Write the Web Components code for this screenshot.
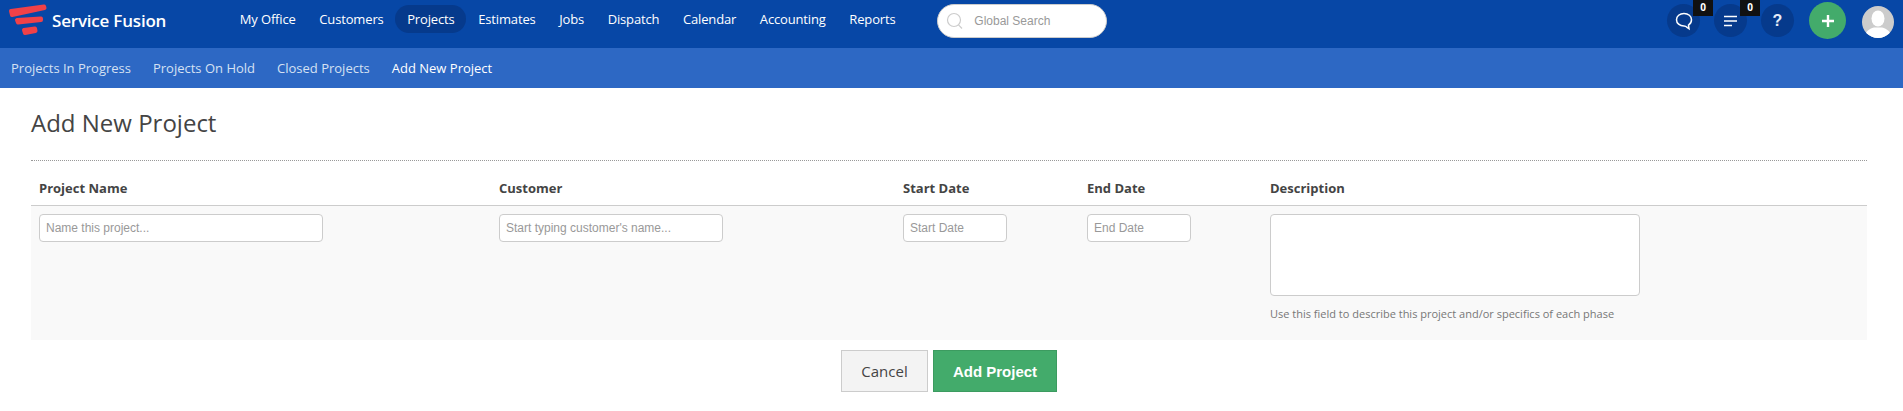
<!DOCTYPE html>
<html>
<head>
<meta charset="utf-8">
<title>Add New Project</title>
<style>
html, body { margin: 0; background: #fff; }
body { font-family: "Open Sans", "Liberation Sans", sans-serif; font-size: 13px; color: #444; }
</style>
</head>
<body>
<sf-topbar>
  <sf-nav-item>My Office</sf-nav-item>
  <sf-nav-item>Customers</sf-nav-item>
  <sf-nav-item active>Projects</sf-nav-item>
  <sf-nav-item>Estimates</sf-nav-item>
  <sf-nav-item>Jobs</sf-nav-item>
  <sf-nav-item>Dispatch</sf-nav-item>
  <sf-nav-item>Calendar</sf-nav-item>
  <sf-nav-item>Accounting</sf-nav-item>
  <sf-nav-item>Reports</sf-nav-item>
</sf-topbar>
<sf-subbar>
  <sf-sub-item>Projects In Progress</sf-sub-item>
  <sf-sub-item>Projects On Hold</sf-sub-item>
  <sf-sub-item>Closed Projects</sf-sub-item>
  <sf-sub-item active>Add New Project</sf-sub-item>
</sf-subbar>
<sf-project-form></sf-project-form>

<script>
class SfTopbar extends HTMLElement {
  constructor() {
    super();
    this.attachShadow({ mode: "open" }).innerHTML = `
<style>
:host { display: flex; align-items: flex-start; height: 48px; background: #0747a6; }
.logo { display: flex; width: 228px; height: 40px; align-items: center; flex: none; color: #fff;
  font-size: 17px; font-weight: 600; letter-spacing: -.2px; }
.logo svg { flex: none; }
.logo span { margin: 0 0 0 2px; }
nav { display: flex; padding-top: 5px; }
sf-search { margin-left: 30px; margin-top: 4px; }
.right { display: flex; margin-left: auto; margin-right: 9px; align-items: flex-start; }
</style>
<div class="logo">
  <svg width="50" height="40" viewBox="0 0 50 40" fill="#f04148" stroke="#f04148" stroke-width="4" stroke-linejoin="round">
    <path d="M11 11 L44 6.500 L44.500 8 L12 15 Z"/>
    <path d="M17 20 L41 18.500 L41 20 L18 22.500 Z"/>
    <path d="M24 30 L35 28.500 L35.500 31 L25 33 Z"/>
  </svg>
  <span>Service Fusion</span>
</div>
<nav><slot></slot></nav>
<sf-search></sf-search>
<div class="right">
  <sf-round-btn count="0">
    <svg width="20" height="20" viewBox="0 0 20 20" fill="none" stroke="#fff" stroke-width="1.5"><path d="M10 2.500c-4.300 0-7.500 2.700-7.500 6.200s3.200 6.300 7.500 6.300c1 0 2 .3 3.400 1.600l1.600 1.100-.5-3.600c1.800-1.200 3-3.200 3-5.400 0-3.500-3.200-6.200-7.500-6.200z"/></svg>
  </sf-round-btn>
  <sf-round-btn count="0">
    <svg width="20" height="20" viewBox="0 0 20 20" fill="none" stroke="#fff" stroke-width="1.500"><path d="M3 5.500h13M3 10h13M3 14.500h8"/></svg>
  </sf-round-btn>
  <sf-round-btn><span style="color:#e6ecf7;font:700 16px 'Liberation Sans',sans-serif">?</span></sf-round-btn>
  <sf-add-btn></sf-add-btn>
  <sf-avatar></sf-avatar>
</div>`;
  }
}

class SfNavItem extends HTMLElement {
  constructor() {
    super();
    this.attachShadow({ mode: "open" }).innerHTML = `
<style>
:host { display: block; height: 28px; line-height: 28px; padding: 0 11.800px; border-radius: 14px;
  color: #fff; font-size: 13px; letter-spacing: -.15px; white-space: nowrap; }
:host([active]) { background: #063a8c; }
</style><slot></slot>`;
  }
}

class SfSearch extends HTMLElement {
  constructor() {
    super();
    this.attachShadow({ mode: "open" }).innerHTML = `
<style>
:host { display: flex; align-items: center; box-sizing: border-box; width: 170px; height: 34px;
  background: #fff; border: 1px solid #ccc; border-radius: 17px; padding-left: 8px; }
svg { flex: none; }
input { border: 0; outline: 0; background: none; margin-left: 10px; width: 110px; padding: 0;
  font: 12px "Liberation Sans", sans-serif; color: #555; }
input::placeholder { color: #999; opacity: 1; }
</style>
<svg width="18" height="18" viewBox="0 0 18 18" fill="none" stroke="#ccc" stroke-width="1.200"><circle cx="8" cy="8" r="6.500"/><path d="M12.500 12.800l3.500 3.700"/></svg>
<input placeholder="Global Search">`;
  }
}

class SfRoundBtn extends HTMLElement {
  constructor() {
    super();
    const count = this.getAttribute("count");
    this.attachShadow({ mode: "open" }).innerHTML = `
<style>
:host { display: flex; position: relative; width: 33px; height: 33px; margin: 4px 7px 0; border-radius: 50%;
  background: #063a8c; align-items: center; justify-content: center; }
:host(:nth-of-type(3)) { margin-right: 0; }
.badge { position: absolute; top: -4px; left: 26px; width: 20px; height: 16px; background: #111; color: #fff;
  font: 700 10px/14px "Open Sans", sans-serif; text-align: center; }
</style>
<slot></slot>${count !== null ? `<span class="badge">${count}</span>` : ""}`;
  }
}

class SfAddBtn extends HTMLElement {
  constructor() {
    super();
    this.attachShadow({ mode: "open" }).innerHTML = `
<style>
:host { display: flex; width: 37px; height: 37px; margin: 2px 0 0 15px; border-radius: 50%; background: #43ab6b;
  align-items: center; justify-content: center; }
</style>
<svg width="14" height="14" viewBox="0 0 14 14" stroke="#fff" stroke-width="2.400"><path d="M7 1v12M1 7h12"/></svg>`;
  }
}

class SfAvatar extends HTMLElement {
  constructor() {
    super();
    this.attachShadow({ mode: "open" }).innerHTML = `
<style>
:host { display: block; width: 32px; height: 32px; margin: 6px 0 0 16px; }
svg { display: block; }
</style>
<svg width="32" height="32" viewBox="0 0 32 32">
  <defs><clipPath id="c"><circle cx="16" cy="16" r="16"/></clipPath></defs>
  <g clip-path="url(#c)">
    <rect width="32" height="32" fill="#ccc"/>
    <ellipse cx="16" cy="12.500" rx="6.500" ry="8" fill="#fff"/>
    <path d="M3 32c0-7 4-9 9-10.500h8c5 1.500 9 3.500 9 10.500z" fill="#fff"/>
  </g>
</svg>`;
  }
}

class SfSubbar extends HTMLElement {
  constructor() {
    super();
    this.attachShadow({ mode: "open" }).innerHTML = `
<style>
:host { display: flex; gap: 22px; align-items: center; height: 40px; padding-left: 11px; background: #2d68c4; }
</style><slot></slot>`;
  }
}

class SfSubItem extends HTMLElement {
  constructor() {
    super();
    this.attachShadow({ mode: "open" }).innerHTML = `
<style>
:host { display: block; color: #d5e1f3; font-size: 13px; white-space: nowrap; }
:host([active]) { color: #fff; }
</style><slot></slot>`;
  }
}

class SfTextField extends HTMLElement {
  constructor() {
    super();
    const w = this.getAttribute("width");
    this.attachShadow({ mode: "open" }).innerHTML = `
<style>
:host { display: block; width: ${w}px; }
input { display: block; box-sizing: border-box; width: 100%; height: 28px; padding: 0 6px; background: #fff;
  border: 1px solid #ccc; border-radius: 4px; outline: 0; font: 12px "Liberation Sans", sans-serif; color: #555; }
input::placeholder { color: #999; opacity: 1; }
</style>
<input placeholder="${this.getAttribute("placeholder")}">`;
  }
}

class SfDescription extends HTMLElement {
  constructor() {
    super();
    this.attachShadow({ mode: "open" }).innerHTML = `
<style>
:host { display: block; }
textarea { display: block; box-sizing: border-box; width: 370px; height: 82px; background: #fff; resize: none;
  border: 1px solid #ccc; border-radius: 4px; outline: 0; margin: 0; }
p { margin: 10px 0 0; font-size: 11px; line-height: 16px; color: #777; }
</style>
<textarea></textarea>
<p><slot></slot></p>`;
  }
}

class SfProjectForm extends HTMLElement {
  constructor() {
    super();
    this.attachShadow({ mode: "open" }).innerHTML = `
<style>
:host { display: block; padding: 0 36px 0 31px; color: #444; }
h1 { margin: 0; padding-top: 18px; height: 54px; border-bottom: 1px dotted #999; font-size: 24px; font-weight: 400;
  line-height: 33px; color: #444; }
.grid { display: grid; grid-template-columns: 460px 404px 184px 183px 1fr; }
.head { height: 44px; line-height: 55px; padding-left: 8px; font-size: 13px; font-weight: 700; color: #444;
  border-bottom: 1px solid #ccc; }
.cell { background: #f9f9f9; height: 134px; padding: 8px 0 0 8px; box-sizing: border-box; }
.actions { display: flex; justify-content: center; gap: 5px; padding: 10px 0 0; }
button { display: block; height: 42px; box-sizing: border-box; margin: 0; padding: 0; }
.cancel { width: 87px; background: #f3f3f3; border: 1px solid #ccc; color: #444; font: 400 15px "Open Sans", sans-serif; }
.add { width: 124px; background: #43ab6b; border: 1px solid #3c9b60; color: #fff; font: 700 15px "Liberation Sans", sans-serif; }
</style>
<h1>Add New Project</h1>
<div class="grid">
  <div class="head">Project Name</div>
  <div class="head">Customer</div>
  <div class="head">Start Date</div>
  <div class="head">End Date</div>
  <div class="head">Description</div>
  <div class="cell"><sf-text-field width="284" placeholder="Name this project..."></sf-text-field></div>
  <div class="cell"><sf-text-field width="224" placeholder="Start typing customer's name..."></sf-text-field></div>
  <div class="cell"><sf-text-field width="104" placeholder="Start Date"></sf-text-field></div>
  <div class="cell"><sf-text-field width="104" placeholder="End Date"></sf-text-field></div>
  <div class="cell"><sf-description>Use this field to describe this project and/or specifics of each phase</sf-description></div>
</div>
<div class="actions">
  <button class="cancel">Cancel</button>
  <button class="add">Add Project</button>
</div>`;
  }
}

customElements.define("sf-search", SfSearch);
customElements.define("sf-round-btn", SfRoundBtn);
customElements.define("sf-add-btn", SfAddBtn);
customElements.define("sf-avatar", SfAvatar);
customElements.define("sf-topbar", SfTopbar);
customElements.define("sf-nav-item", SfNavItem);
customElements.define("sf-subbar", SfSubbar);
customElements.define("sf-sub-item", SfSubItem);
customElements.define("sf-text-field", SfTextField);
customElements.define("sf-description", SfDescription);
customElements.define("sf-project-form", SfProjectForm);
</script>
</body>
</html>
